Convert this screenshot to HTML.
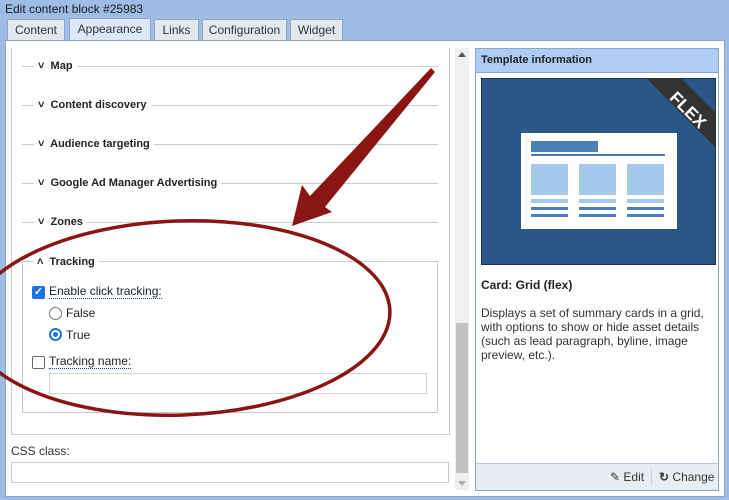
<!DOCTYPE html>
<html><head><style>
*{box-sizing:border-box;margin:0;padding:0}
body{width:729px;height:500px;background:#9dbde6;font-family:"Liberation Sans",Arial,sans-serif;font-size:12px;color:#222;position:relative;overflow:hidden}
.abs{position:absolute}
.title{left:5px;top:2px;font-size:12px;color:#1a1a1a}
.tab{position:absolute;top:19px;height:22px;border:1px solid #8ea6c8;border-bottom:none;background:#e3e8ef;text-align:center;line-height:20px;color:#333}
.tab.act{background:#dce8f7;top:18px;height:23px}
.main{left:5px;top:40px;width:720px;height:457px;background:#fff;border:1px solid #8ea6c8}
.scrollp{left:11px;top:48px;width:439px;height:387px;border:1px solid #c4cad6;border-top:none}
.sec{position:absolute;left:22px;width:416px;height:1px;background:#c9ccd8}
.sec span{position:absolute;top:-7px;background:#fff;font-weight:bold;font-size:11px;color:#222;padding:0 4px 0 4px;line-height:14px}
.chev{position:absolute;font-size:10px}
.sb{left:455px;top:48px;width:14px;height:442px;background:#f0f0f0}
.thumb{left:456px;top:323px;width:12px;height:150px;background:#c1c1c1}
.fs{left:22px;top:261px;width:416px;height:152px;border:1px solid #c4c8d8}
.lbl{font-size:12px;color:#222;border-bottom:1px dotted #2233cc;line-height:13px}
.inp{border:1px solid #cfd3dc;background:#fff}
.rp{left:475px;top:48px;width:244px;height:443px;border:1px solid #8ea6c8;background:#fff}
</style></head><body>
<div class="abs title">Edit content block #25983</div>
<div class="tab" style="left:7px;width:58px">Content</div>
<div class="tab act" style="left:69px;width:82px">Appearance</div>
<div class="tab" style="left:154px;width:45px">Links</div>
<div class="tab" style="left:202px;width:85px">Configuration</div>
<div class="tab" style="left:290px;width:53px">Widget</div>
<div class="abs main"></div>
<div class="abs scrollp"></div>
<div class="sec" style="top:66px"><span style="left:12px">˅&nbsp; Map</span></div>
<div class="sec" style="top:105px"><span style="left:12px">˅&nbsp; Content discovery</span></div>
<div class="sec" style="top:144px"><span style="left:12px">˅&nbsp; Audience targeting</span></div>
<div class="sec" style="top:183px"><span style="left:12px">˅&nbsp; Google Ad Manager Advertising</span></div>
<div class="sec" style="top:222px"><span style="left:12px">˅&nbsp; Zones</span></div>
<div class="abs fs"></div>
<div class="abs" style="left:33px;top:255px;background:#fff;padding:0 4px;font-weight:bold;font-size:11px;line-height:14px">˄&nbsp; Tracking</div>
<div class="abs" style="left:32px;top:286px;width:13px;height:13px;background:#1a73e8;border-radius:2px;color:#fff;font-size:11px;line-height:13px;text-align:center;font-weight:bold">✓</div>
<div class="abs lbl" style="left:49px;top:285px">Enable click tracking:</div>
<div class="abs" style="left:49px;top:307px;width:13px;height:13px;border:1px solid #777;border-radius:50%"></div>
<div class="abs" style="left:66px;top:306px">False</div>
<div class="abs" style="left:49px;top:328px;width:13px;height:13px;border:2px solid #1a73e8;border-radius:50%;padding:2px"><div style="width:5px;height:5px;background:#1a73e8;border-radius:50%"></div></div>
<div class="abs" style="left:66px;top:328px">True</div>
<div class="abs" style="left:32px;top:356px;width:13px;height:13px;border:1px solid #666;border-radius:2px"></div>
<div class="abs lbl" style="left:49px;top:355px">Tracking name:</div>
<div class="abs inp" style="left:49px;top:373px;width:378px;height:21px"></div>
<div class="abs" style="left:11px;top:444px;color:#333">CSS class:</div>
<div class="abs inp" style="left:11px;top:462px;width:438px;height:21px;border-color:#c4cad6"></div>
<div class="abs sb"></div>
<div class="abs thumb"></div>
<div class="abs" style="left:458px;top:52px;width:0;height:0;border:4px solid transparent;border-bottom:5px solid #555;border-top:none"></div>
<div class="abs" style="left:458px;top:481px;width:0;height:0;border:4px solid transparent;border-top:5px solid #aaa;border-bottom:none"></div>
<div class="abs rp"></div>
<div class="abs" style="left:476px;top:49px;width:242px;height:24px;background:#aecdf3;border-bottom:1px solid #8ea6c8;font-weight:bold;font-size:11px;line-height:23px;padding-left:5px">Template information</div>
<svg class="abs" style="left:481px;top:78px" width="235" height="187" viewBox="0 0 235 187">
<rect x="0" y="0" width="235" height="187" fill="#2a5786" stroke="#111" stroke-width="1"/>
<polygon points="165,0 200,0 235,35 235,70" fill="#333"/>
<text x="0" y="0" transform="translate(203,36) rotate(45)" text-anchor="middle" font-family="Liberation Sans" font-weight="bold" font-size="17" fill="#fff">FLEX</text>
<rect x="40" y="55" width="156" height="96" fill="#fff"/>
<rect x="50" y="63" width="67" height="11" fill="#4a7fb8"/>
<rect x="50" y="76" width="134" height="2" fill="#4a7fb8"/>
<g fill="#a6c8ea"><rect x="50" y="86" width="37" height="31"/><rect x="98" y="86" width="37" height="31"/><rect x="146" y="86" width="37" height="31"/>
<rect x="50" y="121" width="37" height="4"/><rect x="98" y="121" width="37" height="4"/><rect x="146" y="121" width="37" height="4"/></g>
<g fill="#4a7fb8"><rect x="50" y="129" width="37" height="3"/><rect x="98" y="129" width="37" height="3"/><rect x="146" y="129" width="37" height="3"/>
<rect x="50" y="136" width="37" height="3"/><rect x="98" y="136" width="37" height="3"/><rect x="146" y="136" width="37" height="3"/></g>
</svg>
<div class="abs" style="left:481px;top:278px;font-weight:bold">Card: Grid (flex)</div>
<div class="abs" style="left:481px;top:306px;width:232px;line-height:14px;color:#333">Displays a set of summary cards in a grid, with options to show or hide asset details (such as lead paragraph, byline, image preview, etc.).</div>
<div class="abs" style="left:476px;top:463px;width:242px;height:27px;background:#e8edf4;border-top:1px solid #b8c8dc"></div>
<div class="abs" style="left:610px;top:470px;color:#333">✎ Edit</div>
<div class="abs" style="left:651px;top:468px;width:1px;height:18px;background:#c4d4e8"></div>
<div class="abs" style="left:659px;top:470px;color:#333"><b>↻</b> Change</div>
<svg class="abs" style="left:0;top:0" width="729" height="500">
<ellipse cx="180" cy="318" rx="210" ry="97" fill="none" stroke="#8b1414" stroke-width="3.5" transform="rotate(-2 180 318)"/>
<polygon points="292,226 302,185 310,196 431,68 435,72 325,207 332,212" fill="#8b1414"/>
</svg>
</body></html>
